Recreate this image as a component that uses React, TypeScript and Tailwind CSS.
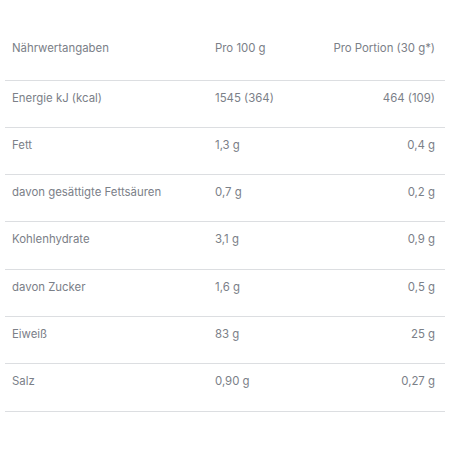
const rows = [
  ["Energie kJ (kcal)", "1545 (364)", "464 (109)"],
  ["Fett", "1,3 g", "0,4 g"],
  ["davon gesättigte Fettsäuren", "0,7 g", "0,2 g"],
  ["Kohlenhydrate", "3,1 g", "0,9 g"],
  ["davon Zucker", "1,6 g", "0,5 g"],
  ["Eiweiß", "83 g", "25 g"],
  ["Salz", "0,90 g", "0,27 g"],
];

export default function App() {
  return (
    <div className="min-h-[450px] w-[450px] bg-white pt-[33px] px-[5px] text-[11.4px] text-[#7b8088] font-['Inter',sans-serif]">
      <table className="w-full border-collapse">
        <thead>
          <tr className="h-[47px] border-b border-[#dcdee1]">
            <th className="pl-[7px] pt-[7px] align-top text-left font-normal w-[210px]">Nährwertangaben</th>
            <th className="pt-[7px] align-top text-left font-normal">Pro 100 g</th>
            <th className="pr-[10px] pt-[7px] align-top text-right font-normal">Pro Portion (30 g*)</th>
          </tr>
        </thead>
        <tbody>
          {rows.map((r) => (
            <tr key={r[0]} className="h-[47.3px] border-b border-[#dcdee1]">
              <td className="pl-[7px] pt-[9px] align-top">{r[0]}</td>
              <td className="pt-[9px] align-top">{r[1]}</td>
              <td className="pr-[10px] pt-[9px] align-top text-right">{r[2]}</td>
            </tr>
          ))}
        </tbody>
      </table>
    </div>
  );
}
